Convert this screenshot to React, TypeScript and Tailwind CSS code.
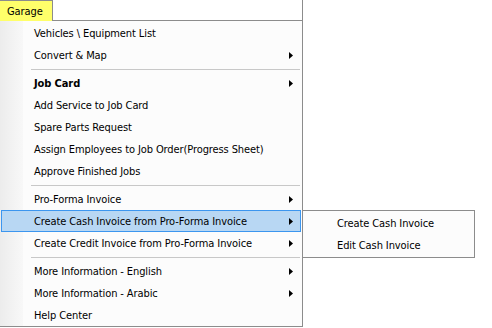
import React from 'react';

type Item = { label?: string; sub?: boolean; bold?: boolean; active?: boolean; sep?: boolean };

const items: Item[] = [
  { label: 'Vehicles \\ Equipment List' },
  { label: 'Convert & Map', sub: true },
  { sep: true },
  { label: 'Job Card', sub: true, bold: true },
  { label: 'Add Service to Job Card' },
  { label: 'Spare Parts Request' },
  { label: 'Assign Employees to Job Order(Progress Sheet)' },
  { label: 'Approve Finished Jobs' },
  { sep: true },
  { label: 'Pro-Forma Invoice', sub: true },
  { label: 'Create Cash Invoice from Pro-Forma Invoice', sub: true, active: true },
  { label: 'Create Credit Invoice from Pro-Forma Invoice', sub: true },
  { sep: true },
  { label: 'More Information - English', sub: true },
  { label: 'More Information - Arabic', sub: true },
  { label: 'Help Center' },
];

function Arrow() {
  return (
    <svg width="4" height="7" viewBox="0 0 4 7" className="absolute left-[287px] top-[7px]">
      <path d="M0 0 L4 3.5 L0 7 Z" fill="#000" />
    </svg>
  );
}

function SubMenu() {
  return (
    <div className="absolute left-[302px] top-0 z-10 w-[173px] h-[48px] bg-[#fcfcfc] border border-[#8c8c8c] pt-px">
      {['Create Cash Invoice', 'Edit Cash Invoice'].map((t) => (
        <div key={t} className="h-[22px] flex items-center pl-[34px]">
          {t}
        </div>
      ))}
    </div>
  );
}

export default function App() {
  return (
    <div
      className="w-[492px] h-[328px] bg-white text-black text-[11px] tracking-[-0.1px] leading-none overflow-hidden"
      style={{ fontFamily: '"DejaVu Sans Condensed", "Liberation Sans", Arial, sans-serif' }}
    >
      {/* Menu bar */}
      <div className="flex h-[21px] w-[303px]">
        <div className="w-[53px] h-[21px] bg-[#ffff6a] border-t border-r border-[#8c8c8c] flex items-center pl-[7px]">
          Garage
        </div>
        <div className="flex-1 border-b border-r border-[#8c8c8c]" />
      </div>

      {/* Dropdown */}
      <div className="relative w-[303px] border-r border-b border-[#8c8c8c] bg-[#fcfcfc] pt-px">
        <div className="absolute left-0 top-0 bottom-0 w-[23px] bg-gradient-to-r from-[#ececec] to-[#f8f8f8]" />
        {items.map((it, i) =>
          it.sep ? (
            <div key={i} className="relative h-[6px] flex items-center pl-[31px] pr-[2px]">
              <div className="h-px w-full bg-[#c8c8c8]" />
            </div>
          ) : (
            <div key={i} className="relative h-[22px] px-[1px]">
              <div
                className={
                  'relative h-full flex items-center pl-[32px] border ' +
                  (it.active ? 'bg-[#b8d7f3] border-[#3c96ef]' : 'border-transparent')
                }
              >
                <span className={it.bold ? 'font-bold' : ''}>{it.label}</span>
                {it.sub && <Arrow />}
              </div>
              {it.active && <SubMenu />}
            </div>
          )
        )}
      </div>
    </div>
  );
}
